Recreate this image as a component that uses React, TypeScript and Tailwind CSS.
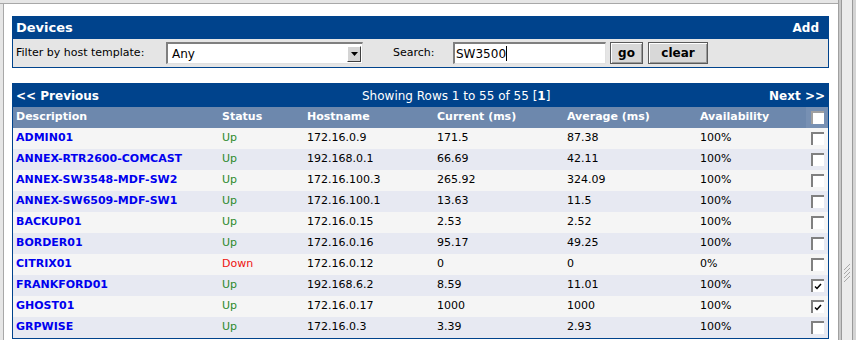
import React from 'react';

type Device = {
  name: string;
  status: 'Up' | 'Down';
  host: string;
  current: string;
  average: string;
  avail: string;
  checked?: boolean;
};

const devices: Device[] = [
  { name: 'ADMIN01', status: 'Up', host: '172.16.0.9', current: '171.5', average: '87.38', avail: '100%' },
  { name: 'ANNEX-RTR2600-COMCAST', status: 'Up', host: '192.168.0.1', current: '66.69', average: '42.11', avail: '100%' },
  { name: 'ANNEX-SW3548-MDF-SW2', status: 'Up', host: '172.16.100.3', current: '265.92', average: '324.09', avail: '100%' },
  { name: 'ANNEX-SW6509-MDF-SW1', status: 'Up', host: '172.16.100.1', current: '13.63', average: '11.5', avail: '100%' },
  { name: 'BACKUP01', status: 'Up', host: '172.16.0.15', current: '2.53', average: '2.52', avail: '100%' },
  { name: 'BORDER01', status: 'Up', host: '172.16.0.16', current: '95.17', average: '49.25', avail: '100%' },
  { name: 'CITRIX01', status: 'Down', host: '172.16.0.12', current: '0', average: '0', avail: '0%' },
  { name: 'FRANKFORD01', status: 'Up', host: '192.168.6.2', current: '8.59', average: '11.01', avail: '100%', checked: true },
  { name: 'GHOST01', status: 'Up', host: '172.16.0.17', current: '1000', average: '1000', avail: '100%', checked: true },
  { name: 'GRPWISE', status: 'Up', host: '172.16.0.3', current: '3.39', average: '2.93', avail: '100%' },
];

const cols = 'grid grid-cols-[206px_85px_130px_130px_133px_1fr_22px] items-center pl-[3px]';

function Check({ checked }: { checked?: boolean }) {
  return (
    <div className="w-[13px] h-[13px] bg-white border-t-2 border-l-2 border-[#808080] flex items-center justify-center">
      {checked && (
        <svg width="8" height="7" viewBox="0 0 8 7">
          <path d="M1 3.5 L3 5.5 L7 1" stroke="#000" strokeWidth="1.5" fill="none" />
        </svg>
      )}
    </div>
  );
}

const App: React.FC = () => {
  return (
    <div className="w-[856px] h-[340px] overflow-hidden flex bg-white font-['DejaVu_Sans',sans-serif] text-[11px] text-black">
      <div className="flex-1 flex flex-col">
        <div className="h-[3px] bg-[#e6e6e6] border-b border-[#a8a8a8] box-content" />
        <div className="flex-1 flex">
          <div className="w-[3px] bg-[#e6e6e6] border-r border-[#a8a8a8] box-content" />
          <div className="flex-1 pl-[8px] pt-[12px] pr-[9px]">
            {/* Devices filter panel */}
            <div className="border border-[#00438c]">
              <div className="bg-[#00438c] h-[22px] flex items-center justify-between px-[3px] text-white font-bold text-[12px]">
                <span className="text-[13px]">Devices</span>
                <span className="pr-[6px]">Add</span>
              </div>
              <div className="bg-[#e5e5e5] h-[28px] flex items-center pl-[3px]">
                <span className="w-[150px]">Filter by host template:</span>
                <div className="w-[197px] h-[22px] bg-white border-t-2 border-l-2 border-[#7f7f7f] border-b border-r border-b-[#e0e0e0] border-r-[#e0e0e0] flex items-center justify-between">
                  <span className="pl-[4px] text-[12px]">Any</span>
                  <div className="w-[14px] h-[16px] mr-[1px] bg-[#d4d4d4] border-t border-l border-white border-b border-r border-b-[#404040] border-r-[#404040] flex items-center justify-center">
                    <svg width="7" height="4" viewBox="0 0 7 4">
                      <path d="M0 0 H7 L3.5 4 Z" fill="#000" />
                    </svg>
                  </div>
                </div>
                <span className="ml-[30px] w-[60px]">Search:</span>
                <div className="w-[153px] h-[22px] bg-white border-t-2 border-l-2 border-[#7f7f7f] border-b border-r border-b-[#e0e0e0] border-r-[#e0e0e0] flex items-center">
                  <span className="pl-[1px] text-[12px]">SW3500</span>
                  <span className="w-px h-[15px] bg-black" />
                </div>
                <button className="ml-[4px] w-[33px] h-[22px] bg-[#d8d8d8] border border-[#5a5a5a] shadow-[inset_1px_1px_0_#fff,inset_-1px_-1px_0_#9a9a9a] font-bold text-[12px]">
                  go
                </button>
                <button className="ml-[5px] w-[60px] h-[22px] bg-[#d8d8d8] border border-[#5a5a5a] shadow-[inset_1px_1px_0_#fff,inset_-1px_-1px_0_#9a9a9a] font-bold text-[12px]">
                  clear
                </button>
              </div>
            </div>

            {/* Device table */}
            <div className="mt-[15px] border border-[#00438c]">
              <div className="bg-[#00438c] h-[23px] flex items-center px-[3px] text-white text-[12px]">
                <span className="font-bold w-[346px]">&lt;&lt; Previous</span>
                <span>
                  Showing Rows 1 to 55 of 55 [<b>1</b>]
                </span>
                <span className="font-bold ml-auto">Next &gt;&gt;</span>
              </div>
              <div className={`${cols} bg-[#6d88ad] h-[21px] text-white font-bold`}>
                <span>Description</span>
                <span>Status</span>
                <span>Hostname</span>
                <span>Current (ms)</span>
                <span>Average (ms)</span>
                <span>Availability</span>
                <div className="h-full bg-[#7790b3] flex items-center justify-center">
                  <div className="w-[13px] h-[13px] bg-white border-t-2 border-l-2 border-[#a0a0a0]" />
                </div>
              </div>
              {devices.map((d, i) => (
                <div key={d.name} className={`${cols} h-[21px] ${i % 2 === 0 ? 'bg-[#f5f5f5]' : 'bg-[#e7e9f2]'}`}>
                  <span className="font-bold text-[#0000ee]">{d.name}</span>
                  <span className={d.status === 'Up' ? 'text-[#2a8a2a]' : 'text-[#ee1111]'}>{d.status}</span>
                  <span>{d.host}</span>
                  <span>{d.current}</span>
                  <span>{d.average}</span>
                  <span>{d.avail}</span>
                  <div className="flex items-center justify-center">
                    <Check checked={d.checked} />
                  </div>
                </div>
              ))}
            </div>
          </div>
        </div>
      </div>
      {/* scrollbar */}
      <div className="w-[18px] flex border-l border-[#a0a0a0]">
        <div className="w-[2px] bg-[#c8c8c8]" />
        <div className="flex-1 bg-[#ececec] border-l border-r border-[#9a9a9a] flex items-start justify-center pt-[262px]">
          <svg width="8" height="20" viewBox="0 0 8 20">
            <path d="M1 8 L7 2 M1 12 L7 6 M1 16 L7 10 M1 20 L7 14" stroke="#a8a8a8" strokeWidth="1" />
          </svg>
        </div>
        <div className="w-[3px] bg-[#d4d4d4]" />
      </div>
    </div>
  );
};

export default App;
